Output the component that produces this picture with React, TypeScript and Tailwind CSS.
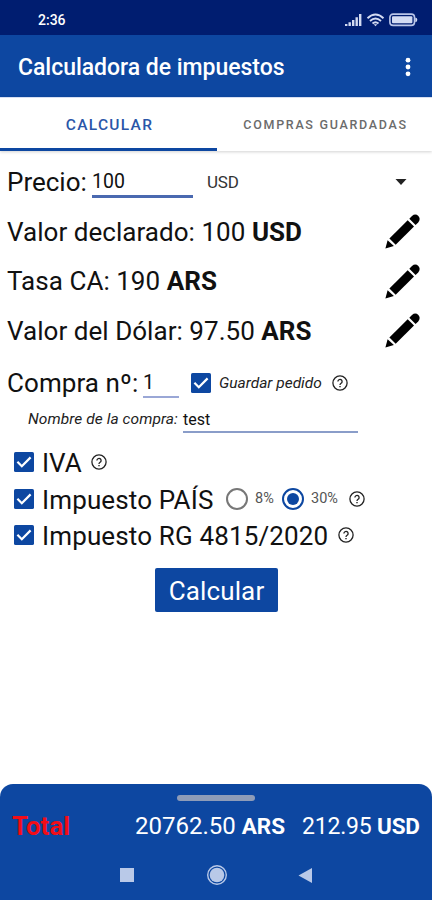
import React from "react";

function Check() {
  return (
    <svg className="block h-5 w-5 shrink-0" viewBox="0 0 20 20">
      <rect width="20" height="20" rx="1.6" fill="#0d47a1" />
      <path d="M3.4 9.8 7.8 14.2 16.6 5.4" fill="none" stroke="#fff" strokeWidth="2.2" />
    </svg>
  );
}

function Help() {
  return (
    <svg className="block h-4 w-4 shrink-0" viewBox="0 0 16 16" fill="none" stroke="#222">
      <circle cx="8" cy="8" r="7.1" strokeWidth="1.3" />
      <path d="M5.9 6.5a2.1 2.1 0 1 1 3.2 1.8C8.3 8.8 8 9.1 8 10" strokeWidth="1.3" />
      <path d="M8 10.9v1.4" strokeWidth="1.4" />
    </svg>
  );
}

function Pencil() {
  return (
    <svg className="block h-[35px] w-[35px] shrink-0" viewBox="0 0 35 35" fill="#000">
      <path d="M.4 34.6 2.6 26.2 8.9 32.1Z" />
      <path d="M4.4 24.6 22.7 6.3 29 12.6 10.7 30.7Z" />
      <path d="M24.3 4.7 27 2Q30.4-.8 33.4 2.1 36 5.1 33.2 8.4L30.6 11Z" />
    </svg>
  );
}

function ValueRow({ label, unit }: { label: string; unit: string }) {
  return (
    <div className="flex h-[49.6px] items-center justify-between pr-[12px] pl-[7px]">
      <div className="text-[26px] tracking-[0.04px]">
        {label} <b className="font-bold">{unit}</b>
      </div>
      <Pencil />
    </div>
  );
}

export default function App() {
  return (
    <div className="flex h-[900px] w-[432px] flex-col overflow-hidden bg-white font-['Roboto',sans-serif] leading-none whitespace-nowrap text-[#111]">
      <div className="flex h-[35px] shrink-0 items-center bg-[#001d70] pt-[4px] pr-[14px] pl-[38px] text-white">
        <span className="text-[14px] font-medium">2:36</span>
        <svg className="ml-auto h-[14px] w-[74px]" viewBox="0 0 74 14" fill="#d3dbf2">
          <path d="M1 11h2.4v2H1zM4.5 9.300h2.400V13H4.500zM8 7h2.400v6H8zM11.500 4.300h2.400V13h-2.400zM15 1h2.400v12H15z" />
          <g fill="none" stroke="#d3dbf2" strokeWidth="1.9">
            <path d="M23.500 5.200Q31.500-2 39.500 5.200M26 8Q31.500 3.100 37 8M28.500 10.500Q31.500 8 34.500 10.500" />
          </g>
          <path d="M29.700 11.200h3.600L31.500 13.200z" />
          <rect x="45.900" y="1.100" width="24.600" height="11.300" rx="3.200" fill="none" stroke="#b9c5e8" strokeWidth="1.600" />
          <rect x="48" y="3.200" width="20.400" height="7.100" rx="1" />
          <path d="M71.300 4.400Q73.300 4.600 73.300 6.800T71.300 9.200z" />
        </svg>
      </div>

      <header className="flex h-[62px] shrink-0 items-center justify-between bg-[#0d47a1] pr-[21px] pl-[18px] text-white">
        <h1 className="pt-[3px] text-[23px] font-medium tracking-[-0.03px]">Calculadora de impuestos</h1>
        <svg className="mt-[2px] h-5 w-[6px]" viewBox="0 0 6 20" fill="#fff">
          <circle cx="3" cy="3.200" r="2.400" />
          <circle cx="3" cy="10" r="2.400" />
          <circle cx="3" cy="16.800" r="2.400" />
        </svg>
      </header>

      <nav className="flex h-[54px] shrink-0 border-t border-[#d5def2] shadow-[0_1px_3px_rgba(0,0,0,0.18)]">
        <div className="flex w-[217px] items-center justify-center border-b-[3px] border-[#0d47a1] pt-[5px] pl-[2px] text-[15.500px] font-medium tracking-[1.300px] text-[#2a56a8]">
          CALCULAR
        </div>
        <div className="flex w-[215px] items-center justify-center pt-[2px] pl-[2px] text-[12.500px] font-medium tracking-[1.700px] text-[#6b6b6b]">
          COMPRAS GUARDADAS
        </div>
      </nav>

      <main className="flex grow flex-col">
        <div className="mt-[6px] flex h-[50px] items-center pr-[25px] pl-[7px]">
          <span className="w-[85px] text-[26px]">Precio:</span>
          <div className="flex h-[32px] w-[101px] items-start border-b-[3px] border-[#4a69b0] pt-[6px] text-[19.500px]">
            100
          </div>
          <span className="ml-[14px] pt-[1px] text-[17px] tracking-[-0.2px] text-[#333]">USD</span>
          <svg className="ml-auto h-[6px] w-[12px]" viewBox="0 0 12 6">
            <path d="M.500 0h11L6 6z" fill="#222" />
          </svg>
        </div>
        <ValueRow label="Valor declarado: 100" unit="USD" />
        <ValueRow label="Tasa CA: 190" unit="ARS" />
        <ValueRow label="Valor del Dólar: 97.50" unit="ARS" />

        <div className="flex h-[54px] items-center pl-[7px]">
          <span className="w-[136px] pt-[1px] text-[26px] tracking-[0.08px]">Compra nº:</span>
          <div className="flex h-[31px] w-[36px] items-start border-b-2 border-[#9aa7d6] pt-[5px] text-[20px]">
            1
          </div>
          <div className="ml-[12px] flex items-center">
            <Check />
            <span className="ml-[8px] w-[113px] pt-[2px] text-[15.500px] italic text-[#222]">Guardar pedido</span>
            <Help />
          </div>
        </div>

        <div className="flex h-[24px] items-start pl-[28px]">
          <span className="w-[155px] pt-[2px] text-[15.500px] italic tracking-[0.08px] text-[#222]">Nombre de la compra:</span>
          <div className="h-[23px] w-[175px] border-b-2 border-[#8a9dc9] pt-[2px] text-[16px]">test</div>
        </div>

        <div className="mt-[10px] flex flex-col pl-[14px]">
          <div className="flex h-[36.500px] items-center">
            <Check />
            <span className="ml-[8px] w-[49px] pt-[2px] text-[26px]">IVA</span>
            <Help />
          </div>
          <div className="flex h-[36.500px] items-center">
            <Check />
            <span className="ml-[8px] w-[184px] pt-[2px] text-[26px] tracking-[0.140px]">Impuesto PAÍS</span>
            <span className="h-[22px] w-[22px] rounded-full border-2 border-[#777]" />
            <span className="ml-[7px] w-[27px] pt-[1px] text-[14.500px] text-[#555]">8%</span>
            <span className="flex h-[22px] w-[22px] items-center justify-center rounded-full border-2 border-[#0d47a1]">
              <span className="h-[12px] w-[12px] rounded-full bg-[#0d47a1]" />
            </span>
            <span className="ml-[7px] w-[38px] pt-[1px] text-[14.500px] text-[#555]">30%</span>
            <Help />
          </div>
          <div className="flex h-[36.500px] items-center">
            <Check />
            <span className="ml-[8px] w-[296px] pt-[2px] text-[26px] tracking-[0.140px]">Impuesto RG 4815/2020</span>
            <Help />
          </div>
        </div>

        <button className="mt-[15px] ml-[155px] flex h-[44px] w-[123px] items-center justify-center rounded-[2px] bg-[#0d47a1] pt-[2px] text-[26px] tracking-[0.140px] text-white">
          Calcular
        </button>
      </main>

      <footer className="flex h-[116px] shrink-0 flex-col rounded-t-[13px] bg-[#0d47a1] text-white">
        <div className="mx-auto mt-[11px] h-[6px] w-[78px] shrink-0 rounded-full bg-[#8e9cb8]" />
        <div className="flex h-[50px] items-center pl-[12px]">
          <span className="w-[123px] text-[26px] font-bold text-[#f20d18]">Total</span>
          <span className="w-[167px] text-[24px]">
            20762.50 <b className="text-[22.500px]">ARS</b>
          </span>
          <span className="text-[23px] tracking-[-0.200px]">
            212.95 <b className="text-[22.500px]">USD</b>
          </span>
        </div>
        <div className="flex h-[48px] items-center pl-[120px]">
          <div className="h-[14px] w-[14px] bg-[#b9c9e8]" />
          <svg className="ml-[72px] h-[22px] w-[22px]" viewBox="0 0 22 22">
            <circle cx="11" cy="11" r="9.300" fill="none" stroke="#b9c9e8" strokeWidth="1.400" />
            <circle cx="11" cy="11" r="7.300" fill="#b9c9e8" />
          </svg>
          <svg className="ml-[70px] h-[15px] w-[14px]" viewBox="0 0 14 15">
            <path d="M.500 7.500 14 0v15z" fill="#b9c9e8" />
          </svg>
        </div>
      </footer>
    </div>
  );
}
